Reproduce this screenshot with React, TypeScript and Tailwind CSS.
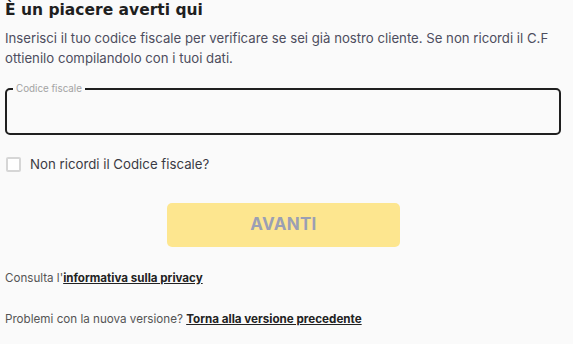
import React from "react";

export default function App() {
  return (
    <div className="w-[573px] h-[344px] bg-[#fafafa] overflow-hidden text-[#333] font-['Inter','Liberation_Sans',sans-serif]">
      <div className="pl-[5px] pr-[11px]">
        <h1 className="pt-[1px] text-[15.5px] leading-[18px] font-bold text-[#1f1f1f] font-['DejaVu_Sans',sans-serif]">È un piacere averti qui</h1>
        <p className="mt-[9px] text-[13.2px] leading-[20px] text-[#4d4d5e]">
          Inserisci il tuo codice fiscale per verificare se sei già nostro cliente. Se non ricordi il C.F ottienilo compilandolo con i tuoi dati.
        </p>
        <fieldset className="mt-[16px] w-[556px] h-[51px] border-2 border-[#1f1f1f] rounded-[5px] px-[6px]">
          <legend className="px-[3px] text-[9.8px] leading-[10px] text-[#a3a3a3]">Codice fiscale</legend>
        </fieldset>
        <label className="mt-[21px] flex items-center gap-[9px]">
          <span className="w-[15px] h-[15px] border-2 border-[#d6d6d6] rounded-[2px] ml-[1px] bg-white" />
          <span className="text-[13.25px] leading-[16px] text-[#3a3a44]">Non ricordi il Codice fiscale?</span>
        </label>
        <div className="mt-[31px] flex justify-center">
          <button className="w-[233px] h-[44px] rounded-[5px] bg-[#fde68f] text-[#9b9fb4] font-bold text-[17px] tracking-[0.3px]">AVANTI</button>
        </div>
        <p className="mt-[24px] text-[11.6px] leading-[14px] text-[#555]">
          Consulta l'<a className="font-bold underline text-[#222]">informativa sulla privacy</a>
        </p>
        <p className="mt-[27px] text-[11.65px] leading-[14px] text-[#555]">
          Problemi con la nuova versione? <a className="font-bold underline text-[#222]">Torna alla versione precedente</a>
        </p>
      </div>
    </div>
  );
}
